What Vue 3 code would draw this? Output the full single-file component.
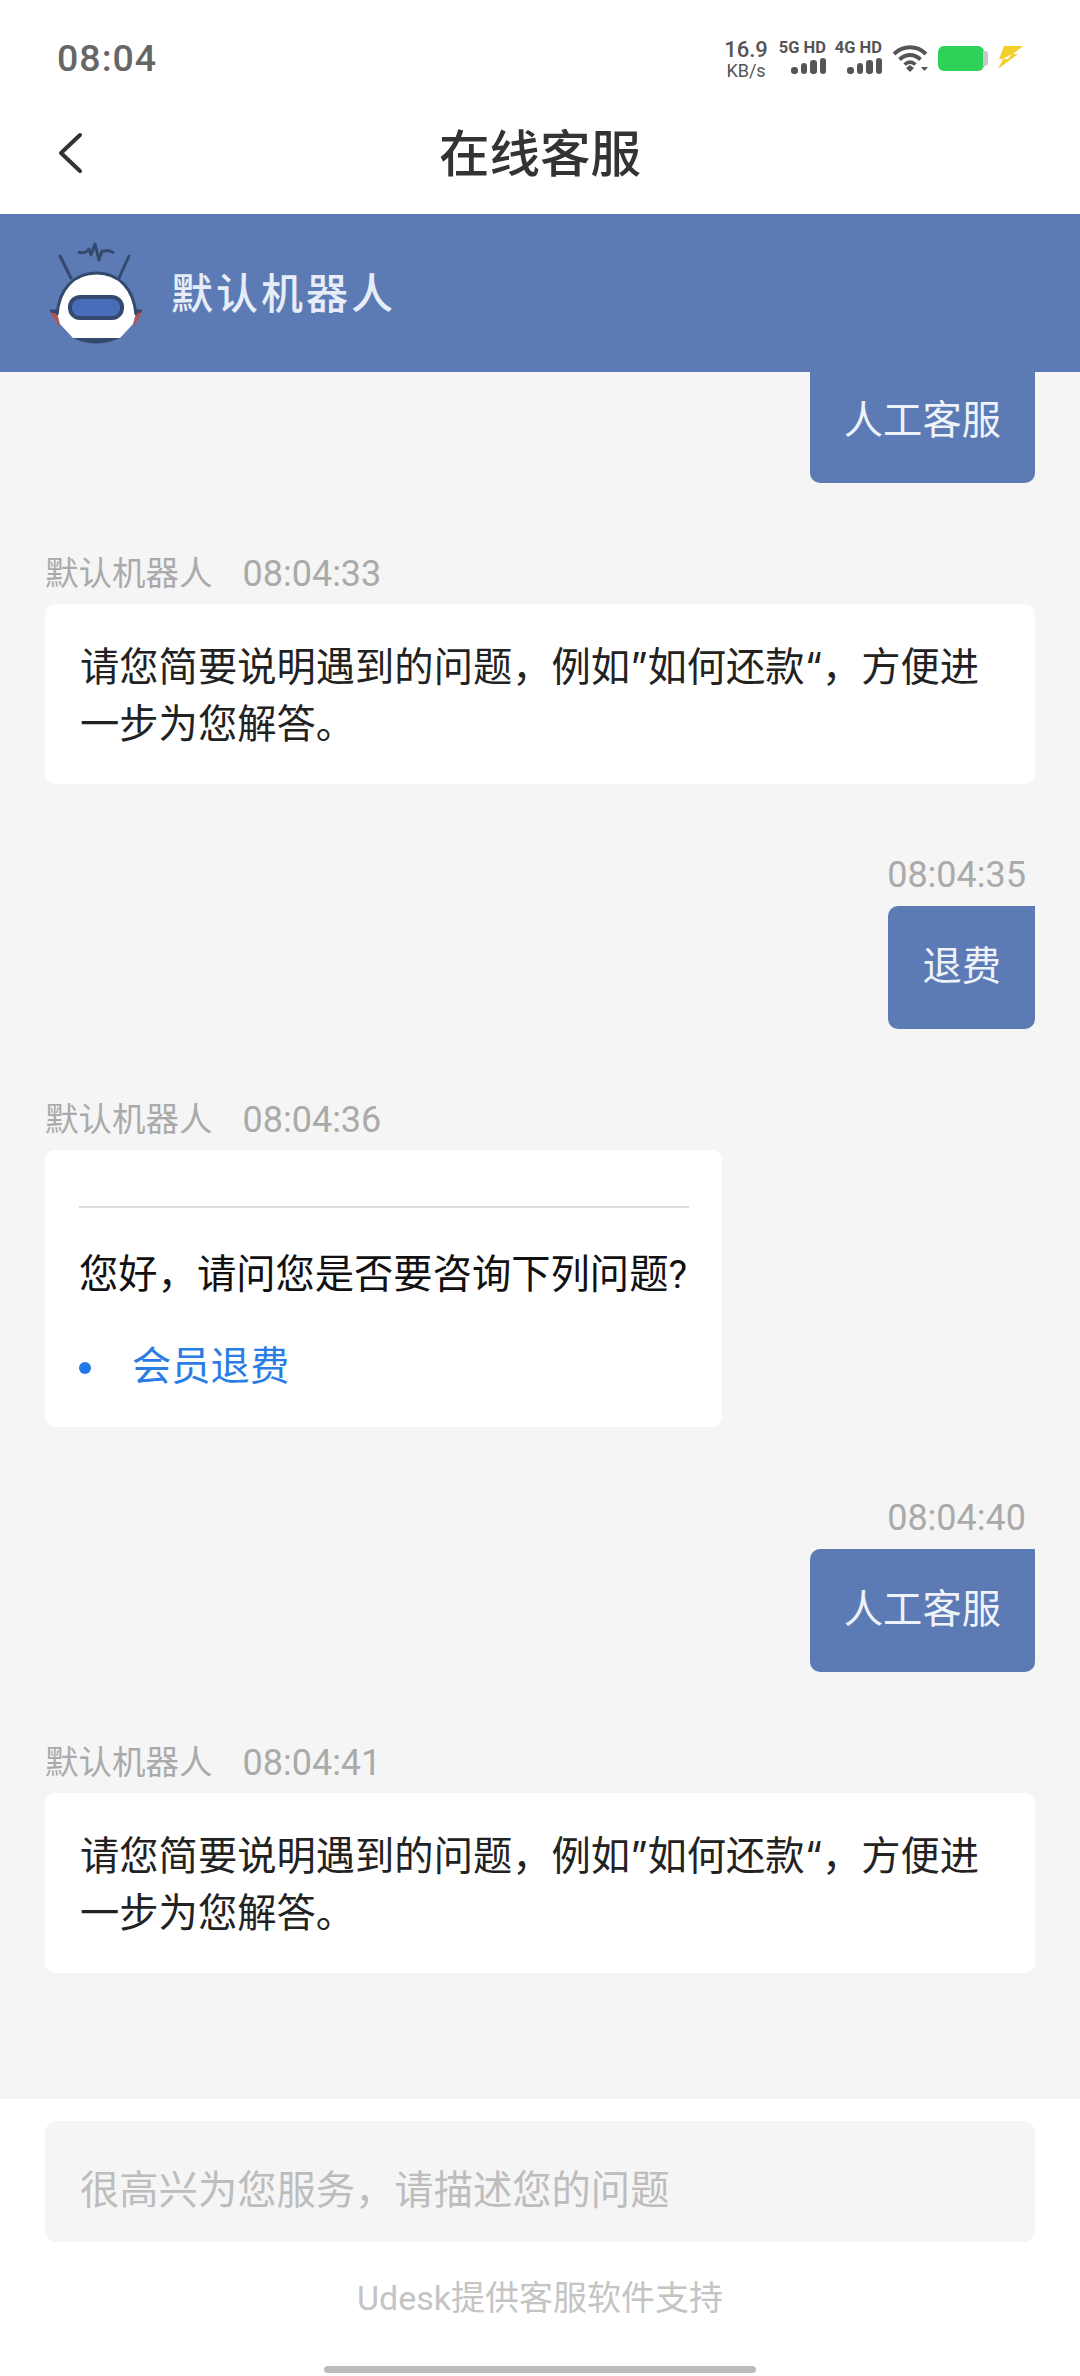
<script setup>
const bars = [7, 11, 14, 16]
const answer = '请您简要说明遇到的问题，例如”如何还款“，方便进一步为您解答。'
</script>

<template>
  <div class="page">
    <header class="status">
      <span class="clock">08:04</span>
      <div class="tray">
        <div class="speed"><span class="num">16.9</span><span class="unit">KB/s</span></div>
        <div v-for="net in ['5G HD', '4G HD']" :key="net" class="net">
          <span class="net-label">{{ net }}</span>
          <div class="bars"><i v-for="h in bars" :key="h" :style="{ height: h + 'px' }"></i></div>
        </div>
        <svg class="wifi" width="36" height="28" viewBox="0 0 36 28">
          <path d="M1 9 C10 0 24 0 33 9" fill="none" stroke="#555" stroke-width="4"/>
          <path d="M6.500 14.500 C13 8.500 21 8.500 27.500 14.500" fill="none" stroke="#555" stroke-width="4"/>
          <path d="M11.500 19.500 C15 16.500 19 16.500 22.500 19.500" fill="none" stroke="#555" stroke-width="3.500"/>
          <path d="M13 23 L17 20 L21 23 L17 27 Z" fill="#555"/>
          <path d="M28 22 L35 22 L31.500 26 Z" fill="#555"/>
        </svg>
        <div class="battery"><div class="cell"></div><div class="nub"></div></div>
        <svg class="bolt" width="28" height="26" viewBox="0 0 28 26">
          <path d="M8 1 L27 1 L17 9 L22 9 L2 24 L7 14 L3 14 Z" fill="#f4cf2c"/>
          <path d="M7 14 L16 9 L12 14 Z" fill="#fff"/>
        </svg>
      </div>
    </header>

    <nav class="nav">
      <svg class="back" width="26" height="42" viewBox="0 0 26 42">
        <path d="M23 3 L4 21 L23 39" fill="none" stroke="#333" stroke-width="4" stroke-linecap="round" stroke-linejoin="round"/>
      </svg>
      <h1 class="title">在线客服</h1>
    </nav>

    <section class="agent">
      <svg class="robot" width="98" height="105" viewBox="0 0 98 105">
        <path d="M13 15 L24 37 M82 15 L72 37" stroke="#34496e" stroke-width="3" stroke-linecap="round"/>
        <path d="M31 11 C34 12 36 12 39 11 L42 8 L44 14 L48 3 L52 19 L55 10 L58 10 C61 9 64 10 67 12" fill="none" stroke="#34496e" stroke-width="3" stroke-linejoin="round"/>
        <path d="M2 69 L11 69 L12 86 Z M96 69 L88 69 L87 86 Z" fill="#b5544f"/>
        <path d="M2 69 L11 68 L11 72 L5 72 Z M96 69 L88 68 L88 72 L93 72 Z" fill="#34496e"/>
        <path d="M26 97 Q49 108 73 97 Z" fill="#34496e"/>
        <path d="M49.500 32 C27 32 12 48 10 72 L13 83 L26 97 L73 97 L86 83 L89 72 C87 48 72 32 49.500 32 Z" fill="#fff"/>
        <path d="M10 74 C12 48 27 32 49.500 32 C72 32 87 48 89 74" fill="none" stroke="#34496e" stroke-width="3"/>
        <rect x="23" y="56" width="52" height="21" rx="10" fill="#4a6dbb" stroke="#34496e" stroke-width="4"/>
      </svg>
      <span class="agent-name">默认机器人</span>
    </section>

    <main class="chat">
      <div class="row user first">
        <div class="bubble blue">人工客服</div>
      </div>

      <div class="row bot">
        <div class="meta"><span class="who">默认机器人</span><span class="stamp">08:04:33</span></div>
        <div class="bubble white answer">{{ answer }}</div>
      </div>

      <div class="row user">
        <div class="meta"><span class="stamp">08:04:35</span></div>
        <div class="bubble blue">退费</div>
      </div>

      <div class="row bot">
        <div class="meta"><span class="who">默认机器人</span><span class="stamp">08:04:36</span></div>
        <div class="bubble white card">
          <hr class="rule" />
          <p class="question">您好，请问您是否要咨询下列问题?</p>
          <div class="link-row"><i class="dot"></i><span class="link">会员退费</span></div>
        </div>
      </div>

      <div class="row user">
        <div class="meta"><span class="stamp">08:04:40</span></div>
        <div class="bubble blue">人工客服</div>
      </div>

      <div class="row bot">
        <div class="meta"><span class="who">默认机器人</span><span class="stamp">08:04:41</span></div>
        <div class="bubble white answer">{{ answer }}</div>
      </div>
    </main>

    <footer class="composer">
      <div class="input">很高兴为您服务，请描述您的问题</div>
      <div class="credit">Udesk提供客服软件支持</div>
      <div class="home"></div>
    </footer>
  </div>
</template>

<style>
html, body { margin: 0; background: #f5f5f5; }
</style>

<style scoped>
.page {
  width: 1080px;
  height: 2376px;
  display: flex;
  flex-direction: column;
  overflow: hidden;
  background: #f5f5f5;
  font-family: Roboto, "Noto Sans CJK SC", sans-serif;
}
.status {
  height: 100px;
  flex: none;
  background: #fff;
  display: flex;
  justify-content: space-between;
  align-items: flex-start;
  padding: 0 56px 0 57px;
  box-sizing: border-box;
}
.clock {
  margin-top: 35px;
  font: 500 37.500px/46px Roboto, sans-serif;
  letter-spacing: 1px;
  color: #666;
}
.tray {
  display: flex;
  align-items: flex-start;
  padding-top: 38px;
  color: #555;
  font-family: Roboto, sans-serif;
}
.speed {
  width: 44px;
  display: flex;
  flex-direction: column;
  align-items: center;
  line-height: 1;
}
.num { font-size: 22px; font-weight: 500; line-height: 23px; }
.unit { font-size: 18px; line-height: 20px; }
.net {
  width: 47px;
  margin-left: 11px;
  display: flex;
  flex-direction: column;
  align-items: flex-end;
}
.net + .net { margin-left: 9px; }
.net-label {
  font-size: 16.500px;
  font-weight: 700;
  line-height: 20px;
  white-space: nowrap;
}
.bars {
  display: flex;
  align-items: flex-end;
  gap: 3px;
  height: 16px;
}
.bars i {
  display: block;
  width: 6.500px;
  border-radius: 3px;
  background: #555;
}
.wifi { margin-left: 11px; margin-top: 7px; }
.battery {
  display: flex;
  align-items: center;
  margin-left: 9px;
  margin-top: 8px;
}
.cell {
  width: 46px;
  height: 25px;
  border-radius: 6px;
  background: #2fd158;
}
.nub {
  width: 5px;
  height: 15px;
  border-radius: 0 3px 3px 0;
  background: #c8c8c8;
  margin-left: -1px;
}
.bolt { margin-left: 8px; margin-top: 7px; }

.nav {
  height: 114px;
  flex: none;
  background: #fff;
  display: flex;
  align-items: center;
  justify-content: center;
  position: relative;
}
.back { position: absolute; left: 57px; top: 32px; }
.title {
  margin: 0 0 5px;
  font-size: 50.500px;
  font-weight: 500;
  line-height: 70px;
  color: #333;
}
.agent {
  height: 158px;
  flex: none;
  background: #5c7bb5;
  display: flex;
  align-items: center;
  padding-left: 47px;
}
.robot { flex: none; }
.agent-name {
  margin-left: 26px;
  padding-top: 3px;
  font-size: 42px;
  letter-spacing: 3px;
  font-weight: 500;
  color: #e6edf8;
  line-height: 60px;
}
.chat {
  flex: 1;
  min-height: 0;
  padding: 0 45px;
  display: flex;
  flex-direction: column;
}
.row { display: flex; flex-direction: column; margin-top: 70px; }
.row.user { align-items: flex-end; }
.row.bot { align-items: flex-start; }
.row.first { margin-top: 0; }
.meta {
  height: 51px;
  line-height: 42px;
  color: #aaa;
  display: flex;
}
.row.user .meta { height: 52px; padding-right: 9px; }
.who { font-size: 33.500px; }
.stamp { font-size: 36px; font-weight: 400; color: #aaa; }
.who + .stamp { margin-left: 30px; }
.bubble {
  box-sizing: border-box;
  font-size: 39.300px;
  line-height: 58px;
  border-radius: 10px;
}
.blue {
  background: #5c7bb5;
  color: #eef2f9;
  border-top-right-radius: 0;
  height: 123px;
  padding: 32px 34px 0;
}
.first .blue { height: 111px; padding-top: 20px; border-top-left-radius: 0; }
.white {
  background: #fff;
  color: #222;
  width: 100%;
  height: 180px;
  padding: 34px 35px 0;
  line-height: 57px;
}
.answer { font-family: Inter, "Noto Sans CJK SC", sans-serif; }
.card {
  width: 677px;
  height: 277px;
  padding: 0 33px 0 34px;
  color: #111;
}
.rule {
  margin: 56px 0 0;
  border: none;
  height: 2px;
  background: #ddd;
}
.question {
  margin: 38px 0 0;
  white-space: nowrap;
  line-height: 58px;
}
.link-row {
  display: flex;
  align-items: center;
  margin-top: 35px;
}
.dot {
  width: 12px;
  height: 12px;
  border-radius: 50%;
  background: #1f7ae8;
}
.link { margin-left: 41px; color: #2b7de3; }
.composer {
  flex: none;
  height: 277px;
  background: #fff;
  padding: 22px 45px 0;
  box-sizing: border-box;
  display: flex;
  flex-direction: column;
  align-items: center;
  position: relative;
}
.input {
  box-sizing: border-box;
  width: 100%;
  height: 121px;
  background: #f5f5f5;
  border-radius: 12px;
  padding: 41px 35px 0;
  font-size: 39.300px;
  line-height: 58px;
  color: #bdbdbd;
}
.credit {
  margin-top: 32px;
  font-size: 34px;
  line-height: 48px;
  color: #c4c4c4;
}
.home {
  position: absolute;
  left: 324px;
  bottom: 3px;
  width: 432px;
  height: 7px;
  border-radius: 4px;
  background: #bdbdbd;
}
</style>
